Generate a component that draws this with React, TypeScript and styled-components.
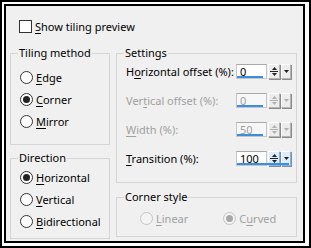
import React from "react";
import styled, { createGlobalStyle } from "styled-components";

const GlobalStyle = createGlobalStyle`
  body {
    margin: 0;
    background: #fff;
  }
`;

const Frame = styled.div`
  width: 311px;
  height: 248px;
  box-sizing: border-box;
  border: 2px solid #000;
  padding: 2px 4px 3px 2px;
  background: #fff;
  font-family: "Noto Sans", "Liberation Sans", sans-serif;
  font-size: 11px;
  color: #000;
`;

const Dialog = styled.div`
  height: 100%;
  box-sizing: border-box;
  border: 2px solid #000;
  background: #f0f0f0;
  padding: 14px 5px 0 4px;
  display: flex;
  flex-direction: column;
`;

const CheckRow = styled.label`
  display: flex;
  align-items: center;
  gap: 3px;
  height: 13px;
  margin-left: 9px;
`;

const CheckBox = styled.span`
  width: 13px;
  height: 13px;
  box-sizing: border-box;
  border: 1px solid #333;
  background: #fff;
`;

const Columns = styled.div`
  display: grid;
  grid-template-columns: 100px 181px;
  column-gap: 6px;
  margin-top: 13px;
`;

const Column = styled.div<{ $gap: number }>`
  display: flex;
  flex-direction: column;
  gap: ${(p) => p.$gap}px;
`;

const Group = styled.fieldset<{ $h: number }>`
  margin: 0;
  padding: 0 0 0 7px;
  min-width: 0;
  height: ${(p) => p.$h}px;
  box-sizing: border-box;
  border: 1px solid #d5d5d5;
`;

const Legend = styled.legend`
  padding: 0 1px;
  line-height: 14px;
`;

const RadioList = styled.div<{ $top: number }>`
  display: flex;
  flex-direction: column;
  gap: 8px;
  margin-top: ${(p) => p.$top}px;
  margin-left: 2px;
`;

const RadioRow = styled.label<{ $disabled?: boolean }>`
  display: flex;
  align-items: center;
  gap: 3px;
  height: 14px;
  color: ${(p) => (p.$disabled ? "#a0a0a0" : "#000")};
`;

const Circle = styled.span<{ $checked?: boolean; $disabled?: boolean }>`
  width: 13px;
  height: 13px;
  box-sizing: border-box;
  border-radius: 50%;
  border: 1px solid ${(p) => (p.$disabled ? "#c4c4c4" : "#333")};
  background: ${(p) => (p.$disabled ? "#f4f4f4" : "#fff")};
  display: flex;
  align-items: center;
  justify-content: center;

  &::after {
    content: "";
    display: ${(p) => (p.$checked ? "block" : "none")};
    width: 7px;
    height: 7px;
    border-radius: 50%;
    background: ${(p) => (p.$disabled ? "#a8a8a8" : "#222")};
  }
`;

const Key = styled.span`
  text-decoration: underline;
  text-underline-offset: 2px;
`;

const SettingRows = styled.div`
  display: flex;
  flex-direction: column;
  gap: 14px;
  margin-top: 4px;
  margin-left: 2px;
`;

const SettingRow = styled.div<{ $disabled?: boolean }>`
  display: grid;
  grid-template-columns: 110px auto;
  align-items: center;
  color: ${(p) => (p.$disabled ? "#a0a0a0" : "#000")};
`;

const Spin = styled.div`
  display: flex;
  height: 15px;
  position: relative;
`;

const Field = styled.div<{ $disabled?: boolean }>`
  width: 31px;
  box-sizing: border-box;
  border: 1px solid #c5c5c5;
  border-top-color: #a9a9a9;
  background: ${(p) => (p.$disabled ? "#f7f7f7" : "#fff")};
  padding-left: 3px;
  line-height: 13px;
`;

const Bar = styled.span`
  position: absolute;
  left: 1px;
  bottom: 1px;
  height: 2px;
  background: #3c8fe0;
`;

const SpinButton = styled.div<{ $w: number; $active?: boolean; $disabled?: boolean }>`
  width: ${(p) => p.$w}px;
  box-sizing: border-box;
  margin-left: 1px;
  border: 1px solid ${(p) => (p.$active ? "#7eb4ea" : "#b5b5b5")};
  border-top-color: #fff;
  border-left-color: #fff;
  box-shadow: 1px 1px 0 #8a8a8a;
  background: ${(p) => (p.$active ? "#dcecfc" : "#ececec")};
  display: flex;
  flex-direction: column;
  align-items: center;
  justify-content: center;
  gap: 1px;
  color: ${(p) => (p.$disabled ? "#b0b0b0" : "#222")};
`;

const Divider = styled.span`
  width: 8px;
  height: 1px;
  background: currentColor;
`;

const Arrow = ({ up }: { up?: boolean }) => (
  <svg width="5" height="3" viewBox="0 0 5 3">
    <path d={up ? "M0 3 L2.5 0 L5 3 Z" : "M0 0 L5 0 L2.5 3 Z"} fill="currentColor" />
  </svg>
);

const CornerRow = styled.div`
  display: flex;
  gap: 35px;
  margin-top: 7px;
  margin-left: 16px;
`;

interface SpinProps {
  value: string;
  fraction: number;
  disabled?: boolean;
  active?: boolean;
}

const SpinBox = ({ value, fraction, disabled, active }: SpinProps) => (
  <Spin>
    <Field $disabled={disabled}>{value}</Field>
    <SpinButton $w={12} $active={active} $disabled={disabled}>
      <Arrow up />
      <Divider />
      <Arrow />
    </SpinButton>
    <SpinButton $w={10} $active={active} $disabled={disabled}>
      <Arrow />
    </SpinButton>
    <Bar style={{ width: `${fraction * 52}px` }} />
  </Spin>
);

interface RadioProps {
  pre?: string;
  k: string;
  rest: string;
  checked?: boolean;
  disabled?: boolean;
}

const Radio = ({ pre, k, rest, checked, disabled }: RadioProps) => (
  <RadioRow $disabled={disabled}>
    <Circle $checked={checked} $disabled={disabled} />
    <span>
      {pre}
      <Key>{k}</Key>
      {rest}
    </span>
  </RadioRow>
);

export default function App() {
  return (
    <>
      <GlobalStyle />
      <Frame>
        <Dialog>
          <CheckRow>
            <CheckBox />
            <span>
              <Key>S</Key>how tiling preview
            </span>
          </CheckRow>
          <Columns>
            <Column $gap={6}>
              <Group $h={99}>
                <Legend>Tiling method</Legend>
                <RadioList $top={10}>
                  <Radio k="E" rest="dge" />
                  <Radio k="C" rest="orner" checked />
                  <Radio k="M" rest="irror" />
                </RadioList>
              </Group>
              <Group $h={88}>
                <Legend>Direction</Legend>
                <RadioList $top={5}>
                  <Radio k="H" rest="orizontal" checked />
                  <Radio k="V" rest="ertical" />
                  <Radio k="B" rest="idirectional" />
                </RadioList>
              </Group>
            </Column>
            <Column $gap={7}>
              <Group $h={137}>
                <Legend>Settings</Legend>
                <SettingRows>
                  <SettingRow>
                    <span>
                      H<Key>o</Key>rizontal offset (%):
                    </span>
                    <SpinBox value="0" fraction={0.5} />
                  </SettingRow>
                  <SettingRow $disabled>
                    <span>
                      Ver<Key>t</Key>ical offset (%):
                    </span>
                    <SpinBox value="0" fraction={0.5} disabled />
                  </SettingRow>
                  <SettingRow $disabled>
                    <span>
                      <Key>W</Key>idth (%):
                    </span>
                    <SpinBox value="50" fraction={0.5} disabled />
                  </SettingRow>
                  <SettingRow>
                    <span>
                      <Key>T</Key>ransition (%):
                    </span>
                    <SpinBox value="100" fraction={1} active />
                  </SettingRow>
                </SettingRows>
              </Group>
              <Group $h={47}>
                <Legend>Corner style</Legend>
                <CornerRow>
                  <Radio k="L" rest="inear" disabled />
                  <Radio pre="C" k="u" rest="rved" checked disabled />
                </CornerRow>
              </Group>
            </Column>
          </Columns>
        </Dialog>
      </Frame>
    </>
  );
}
